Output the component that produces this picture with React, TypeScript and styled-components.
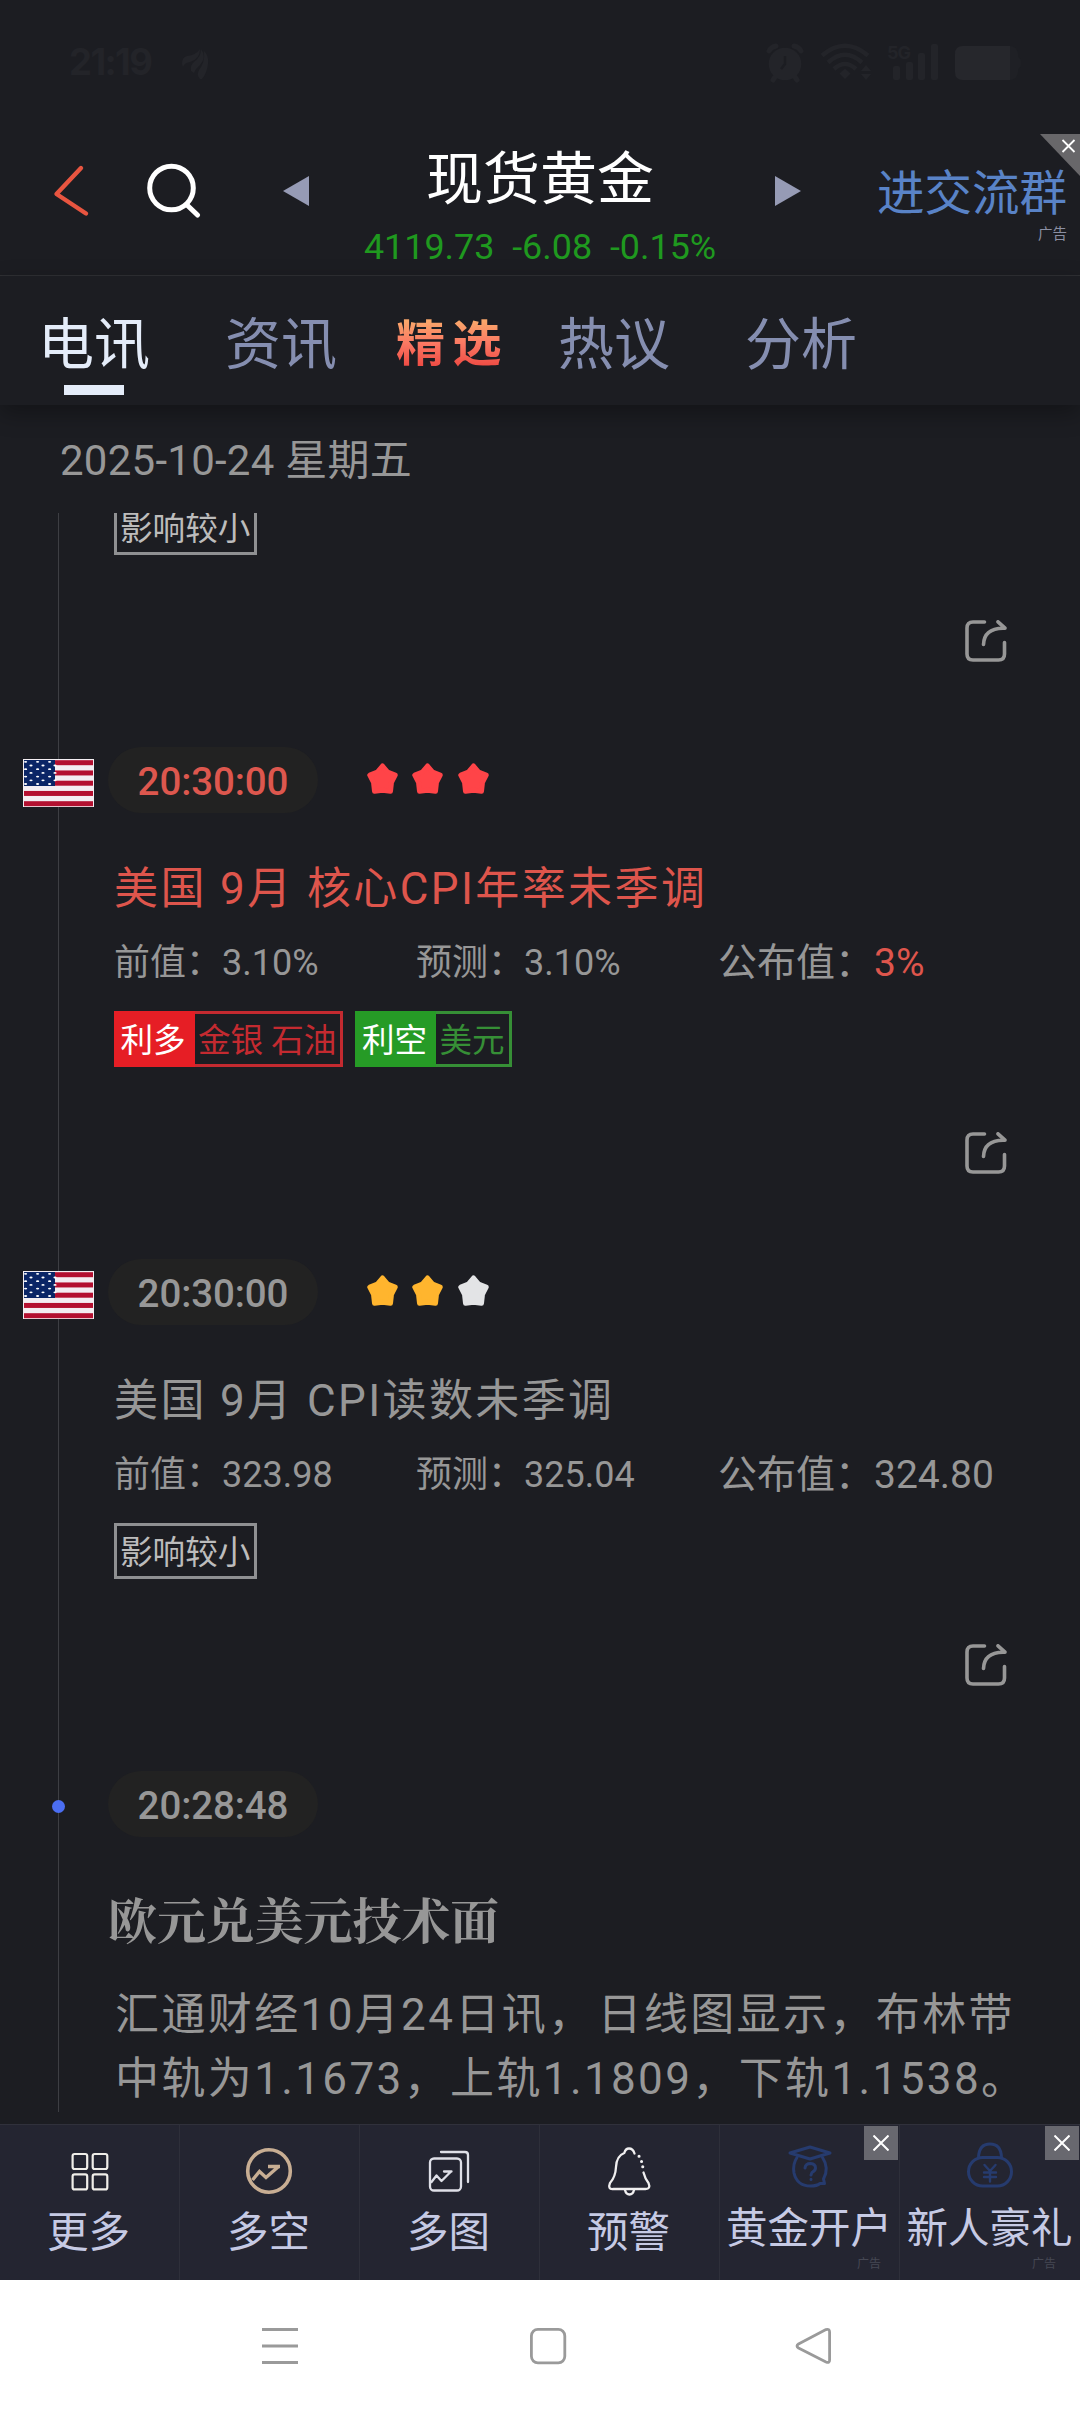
import React from "react";
import styled, { createGlobalStyle } from "styled-components";

const SANS = `Roboto, "Noto Sans CJK SC", sans-serif`;

const Global = createGlobalStyle`
  *, *::before, *::after { box-sizing: border-box; }
  body { margin: 0; background: #1c1d22; font-family: ${SANS}; }
`;

const Screen = styled.div`
  display: flex;
  flex-direction: column;
  width: 1080px;
  height: 2412px;
  overflow: hidden;
  background: #1c1d22;
  white-space: nowrap;
`;

/* ---------- status bar ---------- */

const StatusBar = styled.div`
  display: flex;
  align-items: flex-start;
  height: 134px;
  padding: 39px 59px 0 69px;
  color: #232429;
`;

const Clock = styled.span`
  width: 113px;
  font: 700 36.5px/46px Inter, sans-serif;
  letter-spacing: -1.6px;
`;

const StatusIcons = styled.div`
  display: flex;
  gap: 16px;
  margin-left: auto;

  & > svg:nth-child(2) { margin-right: -1px; }
`;

/* ---------- header ---------- */

const Header = styled.header`
  position: relative;
  display: grid;
  grid-template-columns: 240px 600px 240px;
  height: 142px;
  border-bottom: 1px solid #2f3034;
`;

const HeaderLeft = styled.div`
  display: flex;
  align-items: flex-start;
  gap: 55px;
  padding: 28px 0 0 53px;
`;

const Switcher = styled.div`
  display: flex;
  justify-content: space-between;
  padding: 0 39px 0 43px;
`;

const ArrowSlot = styled.div`
  padding-top: 42px;
`;

const Quote = styled.div`
  display: flex;
  flex-direction: column;
  align-items: center;
  padding-right: 4px;
`;

const Symbol = styled.h1`
  margin: 0;
  padding-top: 9px;
  font-size: 57px;
  font-weight: 400;
  line-height: 74px;
  color: #fff;
`;

const Price = styled.div`
  padding-top: 9px;
  font-size: 35.9px;
  line-height: 42px;
  color: #1f991f;
  white-space: pre;
`;

const Promo = styled.div`
  display: flex;
  flex-direction: column;
  align-items: flex-end;
  padding: 29px 13px 0 0;
  color: #5983c7;
  font-size: 47.5px;
  line-height: 62px;
`;

const AdMark = styled.span`
  font-size: 14.5px;
  line-height: 20px;
  color: #8b8fa3;
`;

const Corner = styled.div`
  position: absolute;
  top: 0;
  right: 0;
  display: flex;
`;

/* ---------- tabs ---------- */

const Tabs = styled.nav`
  position: relative;
  z-index: 1;
  display: flex;
  height: 129px;
  padding: 29px 0 0 38px;
  background: #1c1d22;
  box-shadow: 0 8px 22px rgba(0, 0, 0, 0.32);
`;

const Tab = styled.div<{ $active?: boolean; $width: number }>`
  display: flex;
  flex-direction: column;
  align-items: center;
  width: 112px;
  margin-right: ${(p) => p.$width - 112}px;
  font-size: 56px;
  line-height: 80px;
  color: ${(p) => (p.$active ? "#e4ecf9" : "#858eb0")};

  &::after {
    content: "";
    width: 60px;
    height: 10px;
    background: ${(p) => (p.$active ? "#e4ecf9" : "transparent")};
  }
`;

const HotTab = styled.div`
  width: 162px;
  height: 80px;
  font-size: 49px;
  font-weight: 700;
  line-height: 79px;
  letter-spacing: 7.5px;
  background: linear-gradient(#f9a76a 20%, #fb7863 48%, #ec4640 80%);
  background-clip: text;
  -webkit-background-clip: text;
  color: transparent;
`;

/* ---------- feed ---------- */

const DateLine = styled.div`
  height: 108px;
  padding: 28px 0 0 60px;
  font-size: 42px;
  line-height: 56px;
  letter-spacing: 0.25px;
  color: #979797;
`;

const Feed = styled.main`
  position: relative;
  height: 1599px;
  overflow: hidden;

  &::before {
    content: "";
    position: absolute;
    left: 58px;
    top: 0;
    bottom: 0;
    width: 1px;
    background: #3d3e43;
  }
`;

const FeedEnd = styled.div`
  height: 12px;
`;

const Entry = styled.article`
  display: flex;
  flex-direction: column;
  height: 512px;
`;

const EntryTop = styled.div`
  display: grid;
  grid-template-columns: 108px 210px auto;
  align-items: center;
  justify-content: start;
  height: 66px;
`;

const Marker = styled.div`
  position: relative;
  display: flex;
  justify-content: center;
  padding: 5px 0 0 9px;
`;

const Dot = styled.i`
  width: 13px;
  height: 13px;
  border-radius: 50%;
  background: #4b6ef2;
`;

const TimePill = styled.div<{ $hot?: boolean }>`
  height: 66px;
  border-radius: 33px;
  background: #222222;
  color: ${(p) => (p.$hot ? "#dd574e" : "#979797")};
  font-size: 38.5px;
  font-weight: 500;
  line-height: 69px;
  text-align: center;
  letter-spacing: -0.1px;
`;

const Stars = styled.div`
  display: flex;
  gap: 14.5px;
  padding: 0 0 3px 48.5px;
`;

const Title = styled.h2<{ $hot?: boolean }>`
  margin: 44px 0 0 114px;
  font-size: 44px;
  font-weight: 400;
  line-height: 64px;
  letter-spacing: 2.4px;
  color: ${(p) => (p.$hot ? "#de554c" : "#979797")};
`;

const Figures = styled.div`
  display: grid;
  grid-template-columns: 302px 302px auto;
  align-items: center;
  justify-content: start;
  height: 60px;
  margin: 12px 0 0 114px;
  color: #979797;
`;

const Figure = styled.span<{ $main?: boolean }>`
  font-size: ${(p) => (p.$main ? 39 : 36)}px;
  line-height: 60px;
`;

const Hot = styled.span`
  color: #de554c;
`;

const Tags = styled.div<{ $flush?: boolean }>`
  display: flex;
  gap: 12px;
  margin: ${(p) => (p.$flush ? 0 : 18)}px 0 0 114px;
  font-size: 32.6px;
  line-height: 55px;
`;

const Tag = styled.div<{ $line: string; $cut?: boolean }>`
  display: flex;
  height: ${(p) => (p.$cut ? 42 : 56)}px;
  border: 3px solid ${(p) => p.$line};
  border-top-width: ${(p) => (p.$cut ? 0 : 3)}px;
  line-height: ${(p) => (p.$cut ? "33px" : "inherit")};
  color: ${(p) => p.$line};
`;

const TagHead = styled.span<{ $fill: string }>`
  width: 81px;
  margin: -3px 0 -3px -3px;
  padding: 3px 0 0 6.5px;
  background: ${(p) => p.$fill};
  color: #fff;
`;

const TagBody = styled.span<{ $plain?: boolean }>`
  padding: 0 4px 0 3px;
  color: ${(p) => (p.$plain ? "#bcbcbc" : "inherit")};
`;

const ShareRow = styled.div`
  display: flex;
  justify-content: flex-end;
  padding: 65px 73px 0 0;
`;

const Headline = styled.h2`
  margin: 45px 0 0 108px;
  font: 700 48.9px/72px "Noto Serif CJK SC", "Noto Serif SC", "Source Han Serif SC", "Liberation Serif", "Noto Sans CJK SC", serif;
  color: #979797;
`;

const Summary = styled.p`
  width: 930px;
  margin: 29px 0 0 115px;
  font-size: 44px;
  line-height: 64px;
  letter-spacing: 2.38px;
  color: #979797;
`;

const Pause = styled.span`
  margin-right: 3px;
`;

/* ---------- bottom bar ---------- */

const Dock = styled.footer`
  display: grid;
  grid-template-columns: repeat(6, 180px);
  height: 156px;
  background: #242531;
  border-top: 1px solid #30313b;
`;

const DockItem = styled.div<{ $ad?: boolean }>`
  position: relative;
  display: flex;
  flex-direction: column;
  align-items: center;
  padding: ${(p) => (p.$ad ? "13px 0 0" : "19px 2px 0 0")};
  border-right: 1px solid #2e2f3a;

  &:last-child { border-right: 0; }
`;

const DockLabel = styled.span<{ $ad?: boolean }>`
  font-size: 41.5px;
  line-height: 60px;
  margin-top: ${(p) => (p.$ad ? 9 : 7)}px;
  margin-right: ${(p) => (p.$ad ? 1 : 0)}px;
  color: #c6cae4;
`;

const DockAd = styled.span<{ $right: number }>`
  position: absolute;
  right: ${(p) => p.$right}px;
  bottom: 7px;
  font-size: 12px;
  line-height: 18px;
  color: #464854;
`;

const CloseBox = styled.span`
  position: absolute;
  top: 1px;
  right: 1px;
  display: flex;
  align-items: center;
  justify-content: center;
  width: 34px;
  height: 34px;
  background: #68686f;
`;

/* ---------- system navigation ---------- */

const SystemNav = styled.div`
  display: flex;
  align-items: flex-start;
  height: 132px;
  padding: 46px 0 0 260px;
  background: #fff;
`;

const NavSlot = styled.div<{ $gap?: number }>`
  display: flex;
  margin-left: ${(p) => p.$gap || 0}px;
`;

/* ---------- drawings ---------- */

const Star = ({ color }: { color: string }) => (
  <svg width="31" height="31" viewBox="0 0 31 31" fill={color} stroke={color} strokeWidth="5" strokeLinejoin="round">
    <path d="M15.500 3L20.600 9.200L28.200 12.200L24.500 19.300L23.500 28.200L15.500 27.200L7.500 28.200L6.500 19.300L2.800 12.200L10.400 9.200Z" />
  </svg>
);

const STAR_ROWS = [0, 1, 2, 3, 4, 5, 6];

const Flag = () => (
  <svg width="71" height="48" viewBox="0 0 71 48">
    <rect width="71" height="48" fill="#f3eef2" />
    {[0, 1, 2, 3, 4].map((i) => (
      <rect key={i} x="1" y={1.2 + i * 10.25} width="69" height="5" fill="#b31030" />
    ))}
    <rect x="1" y="1" width="31" height="26" fill="#0a2566" />
    {STAR_ROWS.map((r) =>
      [0, 1, 2].map((c) => (
        <ellipse key={`${r}-${c}`} cx={(r % 2 ? 8 : 2.6) + c * 12} cy={2.8 + r * 3.7} rx="1.6" ry="0.9" fill="#fff" />
      ))
    )}
  </svg>
);

const Share = () => (
  <svg width="42" height="42" viewBox="0 0 42 42" fill="none" stroke="#979797" strokeWidth="3.6" strokeLinecap="round" strokeLinejoin="round">
    <path d="M19.5 2H8Q2 2 2 8V34Q2 40 8 40H33.5Q39.5 40 39.5 34V22.5" />
    <path d="M18.5 24.5Q19 8.5 38 8.2H40L33 1.8" />
  </svg>
);

const Cross = ({ size, w }: { size: number; w: number }) => (
  <svg width={size} height={size} viewBox="0 0 16 16" stroke="#fff" strokeWidth={w} fill="none">
    <path d="M0.5 0.5L15.5 15.5M15.5 0.5L0.5 15.5" />
  </svg>
);

const StatusGlyph = styled.svg<{ $top: number }>`
  margin-top: ${(p) => p.$top}px;
`;

const AlarmIcon = () => (
  <StatusGlyph $top={4} width="38" height="40" viewBox="0 0 38 40">
    <g fill="none" stroke="#232429" strokeWidth="5" strokeLinecap="round">
      <path d="M3 8Q5 4 10 3M35 8Q33 4 28 3M9 34L7 37M29 34L31 37" />
    </g>
    <circle cx="19" cy="21" r="16.3" fill="#232429" />
    <path d="M19 13V21L15 26" fill="none" stroke="#1c1d22" strokeWidth="2.5" />
  </StatusGlyph>
);

const WifiIcon = () => (
  <StatusGlyph $top={4} width="52" height="38" viewBox="0 0 52 38" fill="none" stroke="#232429" strokeWidth="4.4">
    <path d="M2 12.500Q25 -7 48 12.500M8 19.500Q25 4 42 19.500M14 26Q25 16 36 26" />
    <path d="M25 25.500L30.500 30.500L25 36L19.500 30.500Z" fill="#232429" stroke="none" />
    <path d="M46 22L51 28H41ZM46 37L51 31H41Z" fill="#232429" stroke="none" />
  </StatusGlyph>
);

const SignalIcon = () => (
  <StatusGlyph $top={4} width="52" height="38" viewBox="0 0 52 38" fill="#232429">
    <text x="0" y="16" fontFamily="Inter, sans-serif" fontWeight="700" fontSize="18" letterSpacing="-1">5G</text>
    <rect x="6" y="23" width="7" height="14" rx="2" />
    <rect x="19" y="19" width="7" height="18" rx="2" />
    <rect x="31" y="10" width="7" height="27" rx="2" />
    <rect x="44" y="1" width="7" height="36" rx="2" />
  </StatusGlyph>
);

const BatteryIcon = () => (
  <StatusGlyph $top={7} width="66" height="34" viewBox="0 0 66 34">
    <rect width="63" height="34" rx="8" fill="#1f2025" />
    <path d="M8 0H55V34H8Q0 34 0 26V8Q0 0 8 0Z" fill="#26272c" />
    <path d="M63 11Q66 12 66 17Q66 22 63 23Z" fill="#1f2025" />
  </StatusGlyph>
);

const GridIcon = () => (
  <svg width="48" height="52" viewBox="0 0 48 52" fill="none" stroke="#f0eee9" strokeWidth="2.2">
    <rect x="7.600" y="10" width="14.600" height="15" rx="2" />
    <rect x="27.700" y="10" width="14.600" height="15" rx="2" />
    <rect x="7.600" y="30.400" width="14.600" height="15" rx="2" />
    <rect x="27.700" y="30.400" width="14.600" height="15" rx="2" />
  </svg>
);

const TrendIcon = () => (
  <svg width="48" height="52" viewBox="0 0 48 52" fill="none" stroke="#c8ae93" strokeWidth="3.600">
    <circle cx="24" cy="27" r="21.300" />
    <path d="M7.500 36L14.500 27.500L21 33.500L33 23M23 22.500H35" strokeWidth="3.400" />
  </svg>
);

const ChartsIcon = () => (
  <svg width="48" height="52" viewBox="0 0 48 52" fill="none" stroke="#dfe0e8" strokeWidth="2.300" strokeLinecap="round" strokeLinejoin="round">
    <rect x="5" y="14.500" width="31" height="32" rx="4" />
    <path d="M16 8H40Q43 8 43 11V38" />
    <path d="M6.500 38L11.500 31.500L16.500 37L26 27.500M19 27.500H26.500" />
  </svg>
);

const BellIcon = () => (
  <svg width="48" height="52" viewBox="0 0 48 52" fill="none" stroke="#f0eff0" strokeWidth="2.300" strokeLinecap="round" strokeLinejoin="round">
    <path d="M29.500 9.500Q28 4.500 24 4.500Q20.500 4.500 19.300 9Q11.500 12 11 23Q10.500 33 5 39Q2.500 45.500 8 45H40.500Q46 45 43.500 39Q40 34.500 38.500 28.500" />
    <path d="M34 12.300h.1M36.500 17.500h.1M37.700 22.800h.1" strokeWidth="3" />
    <path d="M20 46Q21 50.500 24.500 50.500Q28 50.500 29 46" />
  </svg>
);

const AccountIcon = () => (
  <svg width="48" height="52" viewBox="0 0 48 52" fill="none" stroke="#263b6e" strokeWidth="3" strokeLinecap="round" strokeLinejoin="round">
    <path d="M24 9L44 15L24 21L4 15Z" />
    <path d="M11 19.500Q6.500 26 8 35Q11 48 24.500 48Q31 48 34 45.500H38.500L37.500 41Q43.500 30 36.500 19.500" />
    <path d="M19 30Q19.500 25.500 24.500 25.500Q29.500 26 29.500 30Q29.500 32.500 26 34.500L25 37M25 41.300v.2" />
  </svg>
);

const PurseIcon = () => (
  <svg width="48" height="52" viewBox="0 0 48 52" fill="none" stroke="#263b6e" strokeWidth="3" strokeLinecap="round" strokeLinejoin="round">
    <path d="M12.500 19.500Q13 6 24 6Q35 6 35.500 19.500" />
    <rect x="2.500" y="19.500" width="43" height="28.500" rx="14.200" />
    <path d="M18.500 27L24 33L29.500 27M24 33V43.500M18 34.500H30M18 39H30" strokeWidth="2.400" />
  </svg>
);

/* ---------- content ---------- */

const GREY = "#8f9092";

const MinorTag = ({ cut }: { cut?: boolean }) => (
  <Tags $flush={cut}>
    <Tag $line={GREY} $cut={cut}>
      <TagBody $plain>影响较小</TagBody>
    </Tag>
  </Tags>
);

type EntryData = {
  title: string;
  hot?: boolean;
  stars: string[];
  previous: string;
  forecast: string;
  actual: string;
  tags: React.ReactNode;
};

const DataEntry = ({ title, hot, stars, previous, forecast, actual, tags }: EntryData) => (
  <Entry>
    <EntryTop>
      <Marker>
        <Flag />
      </Marker>
      <TimePill $hot={hot}>20:30:00</TimePill>
      <Stars>
        {stars.map((c, i) => (
          <Star key={i} color={c} />
        ))}
      </Stars>
    </EntryTop>
    <Title $hot={hot}>{title}</Title>
    <Figures>
      <Figure>前值：{previous}</Figure>
      <Figure>预测：{forecast}</Figure>
      <Figure $main>
        公布值：{hot ? <Hot>{actual}</Hot> : actual}
      </Figure>
    </Figures>
    {tags}
    <ShareRow>
      <Share />
    </ShareRow>
  </Entry>
);

const PreviousTail = styled.div`
  height: 234px;
`;

export default function App() {
  return (
    <Screen>
      <Global />
      <StatusBar>
        <Clock>21:19</Clock>
        <StatusGlyph $top={10} width="28" height="30" viewBox="0 0 28 30" fill="#232429">
          <path d="M0 15Q0 8 5 7Q14 6 18 0Q18 10 8 13Q2 14 1 18ZM9 22Q8 16 12 13Q19 8 19 0Q25 8 18 16Q14 19 12 24ZM18 30Q14 26 17 21Q23 14 22 2Q27 6 26 15Q25 24 20 30Z" />
        </StatusGlyph>
        <StatusIcons>
          <AlarmIcon />
          <WifiIcon />
          <SignalIcon />
          <BatteryIcon />
        </StatusIcons>
      </StatusBar>

      <Header>
        <HeaderLeft>
          <svg width="38" height="56" viewBox="0 0 38 56" fill="none" stroke="#e85540" strokeWidth="4.400" strokeLinecap="round" strokeLinejoin="round">
            <path d="M28 6L3.500 32L33 51.500" />
          </svg>
          <svg width="56" height="56" viewBox="0 0 56 56" fill="none" stroke="#fff" strokeWidth="5" strokeLinecap="round">
            <circle cx="25.500" cy="26" r="21.800" />
            <path d="M41 43L51.500 53" />
          </svg>
        </HeaderLeft>
        <Switcher>
          <ArrowSlot>
            <svg width="26" height="30" viewBox="0 0 26 30">
              <path d="M0 15L26 0V30Z" fill="#969bb5" />
            </svg>
          </ArrowSlot>
          <Quote>
            <Symbol>现货黄金</Symbol>
            <Price>{"4119.73  -6.08  -0.15%"}</Price>
          </Quote>
          <ArrowSlot>
            <svg width="26" height="30" viewBox="0 0 26 30">
              <path d="M26 15L0 0V30Z" fill="#969bb5" />
            </svg>
          </ArrowSlot>
        </Switcher>
        <Promo>
          进交流群
          <AdMark>广告</AdMark>
        </Promo>
        <Corner>
          <svg width="40" height="42" viewBox="0 0 40 42">
            <path d="M0 0H40V42Z" fill="#68676a" />
            <path d="M22.500 6L34.500 18M34.500 6L22.500 18" stroke="#fff" strokeWidth="1.800" />
          </svg>
        </Corner>
      </Header>

      <Tabs>
        <Tab $active $width={187}>电讯</Tab>
        <Tab $width={171}>资讯</Tab>
        <HotTab>精选</HotTab>
        <Tab $width={187}>热议</Tab>
        <Tab $width={187}>分析</Tab>
      </Tabs>

      <DateLine>2025-10-24 星期五</DateLine>

      <Feed>
        <PreviousTail>
          <MinorTag cut />
          <ShareRow>
            <Share />
          </ShareRow>
        </PreviousTail>

        <DataEntry
          title="美国 9月 核心CPI年率未季调"
          hot
          stars={["#ff4448", "#ff4448", "#ff4448"]}
          previous="3.10%"
          forecast="3.10%"
          actual="3%"
          tags={
            <Tags>
              <Tag $line="#c42a30">
                <TagHead $fill="#e61e25">利多</TagHead>
                <TagBody>金银 石油</TagBody>
              </Tag>
              <Tag $line="#368f36">
                <TagHead $fill="#269b26">利空</TagHead>
                <TagBody>美元</TagBody>
              </Tag>
            </Tags>
          }
        />

        <DataEntry
          title="美国 9月 CPI读数未季调"
          stars={["#ffb52e", "#ffb52e", "#e3e4e6"]}
          previous="323.98"
          forecast="325.04"
          actual="324.80"
          tags={<MinorTag />}
        />

        <Entry>
          <EntryTop>
            <Marker>
              <Dot />
            </Marker>
            <TimePill>20:28:48</TimePill>
          </EntryTop>
          <Headline>欧元兑美元技术面</Headline>
          <Summary>
            汇通财经10月24日讯<Pause>，</Pause>日线图显示，布林带
            <br />
            中轨为1.1673，上轨1.1809，下轨1.1538。
          </Summary>
        </Entry>
      </Feed>
      <FeedEnd />

      <Dock>
        <DockItem>
          <GridIcon />
          <DockLabel>更多</DockLabel>
        </DockItem>
        <DockItem>
          <TrendIcon />
          <DockLabel>多空</DockLabel>
        </DockItem>
        <DockItem>
          <ChartsIcon />
          <DockLabel>多图</DockLabel>
        </DockItem>
        <DockItem>
          <BellIcon />
          <DockLabel>预警</DockLabel>
        </DockItem>
        <DockItem $ad>
          <AccountIcon />
          <DockLabel $ad>黄金开户</DockLabel>
          <DockAd $right={18}>广告</DockAd>
          <CloseBox>
            <Cross size={16} w={2} />
          </CloseBox>
        </DockItem>
        <DockItem $ad>
          <PurseIcon />
          <DockLabel $ad>新人豪礼</DockLabel>
          <DockAd $right={24}>广告</DockAd>
          <CloseBox>
            <Cross size={16} w={2} />
          </CloseBox>
        </DockItem>
      </Dock>

      <SystemNav>
        <NavSlot>
          <svg width="40" height="40" viewBox="0 0 40 40" stroke="#9a9a9a" strokeWidth="3" fill="none">
            <path d="M2 3.500H38M2 20H38M2 36.500H38" />
          </svg>
        </NavSlot>
        <NavSlot $gap={228}>
          <svg width="40" height="40" viewBox="0 0 40 40" stroke="#9a9a9a" strokeWidth="2.800" fill="none">
            <rect x="3.400" y="3.400" width="33.400" height="33.400" rx="6.500" />
          </svg>
        </NavSlot>
        <NavSlot $gap={226}>
          <svg width="40" height="40" viewBox="0 0 40 40" stroke="#9a9a9a" strokeWidth="2.800" fill="none" strokeLinejoin="round">
            <path d="M32 3.600Q35.600 2.500 35.600 6V34Q35.600 37.500 32 36L4.500 22Q1.500 20 4.500 18Z" />
          </svg>
        </NavSlot>
      </SystemNav>
    </Screen>
  );
}
